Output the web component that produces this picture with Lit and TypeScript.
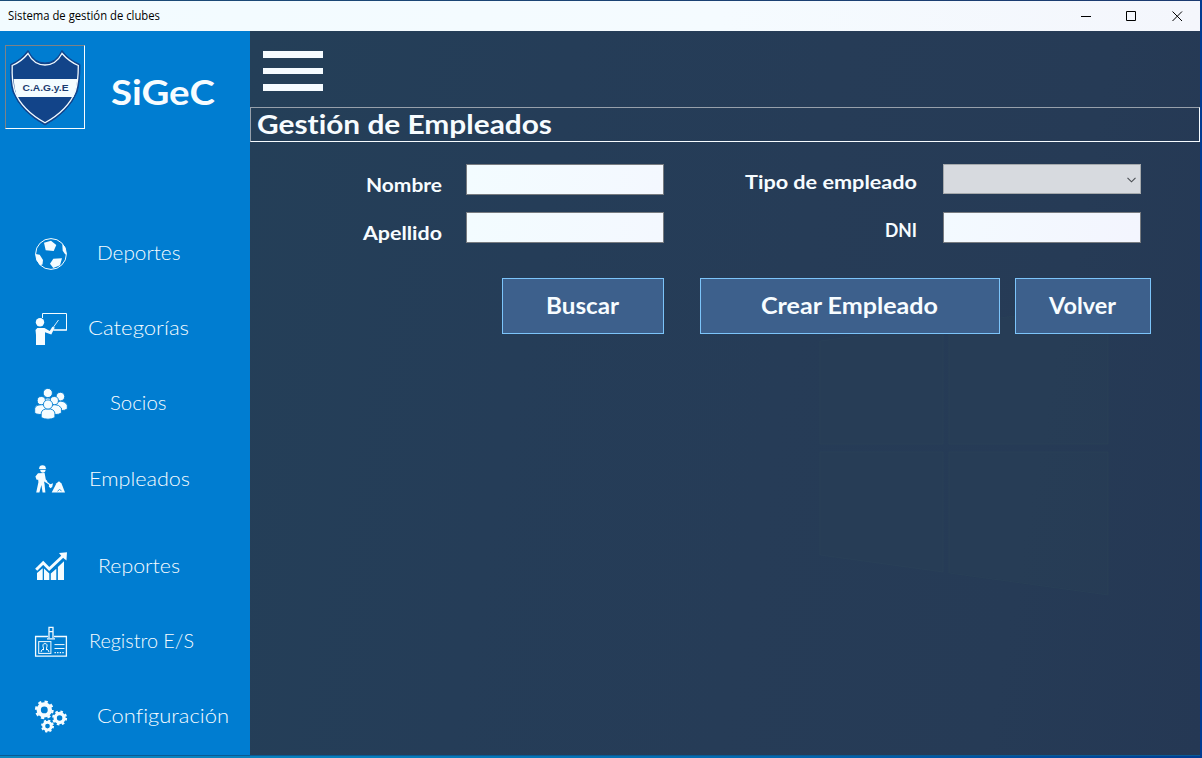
import { LitElement, html, css, svg } from "lit";
import { customElement, property } from "lit/decorators.js";

// Draws one line of text spread over a given advance width.
@customElement("fit-text")
class FitText extends LitElement {
  @property() text = "";
  @property({ type: Number }) w = 100;
  @property({ type: Number }) size = 18;
  static styles = css`
    :host { display: block; flex: none; }
    svg { display: block; overflow: visible; }
    text { fill: currentColor; font-variant-ligatures: none; }
  `;
  render() {
    const base = Math.round(this.size);
    return html`<svg width=${this.w} height=${base + 6}>
      <text x="0" y=${base} font-size=${this.size} textLength=${this.w} lengthAdjust="spacingAndGlyphs">${this.text}</text>
    </svg>`;
  }
}

const gear = (x: number, y: number, r: number, n: number) => {
  const c = 2 * Math.PI * (r - 1);
  return svg`
    <circle cx=${x} cy=${y} r=${r * 0.6} fill="none" stroke="#f5fcff" stroke-width=${r * 0.46}></circle>
    <circle cx=${x} cy=${y} r=${r - 1} fill="none" stroke="#f5fcff" stroke-width="2.2"
      stroke-dasharray=${`${(c / n) * 0.5} ${(c / n) * 0.5}`}></circle>`;
};

const icons: Record<string, unknown> = {
  ball: svg`<circle cx="16" cy="16" r="15.4" fill="none" stroke="#f5fcff" stroke-width="1"/>
    <path d="M9 4.7 16 2.7 21.3 7 18.7 13 10.7 12.3ZM27.3 6.3 30 9 31.5 16 30.3 16.5 27.7 12.7ZM.6 16 4.7 16.7 8 22 7.5 26.5 5 27.3 1.5 22ZM18.3 20.7 27 20.3 25 27.3 18.3 30 15 25.7Z"/>`,
  teacher: svg`<path d="M7.5 5V.5H31.5V17H18.5" fill="none" stroke="#f5fcff" stroke-width="1"/><path d="M19 16H32V18H18Z" opacity=".6"/>
    <circle cx="5" cy="9.3" r="4.2"/><path d="M2.3 15H9.5L14.7 18 17.4 13.7 19.8 14.6 16.3 21.6 10 19.2V32H1V22L.5 17Z"/>
    <path d="M18.5 14 23.5 7" stroke="#f5fcff" stroke-width=".9" fill="none"/>`,
  group: svg`<g stroke="#007dd1" stroke-width=".9">
    <path d="M7.5 21V15Q8 10 12.8 10T18 15V21Z"/><circle cx="12.8" cy="5" r="4.6"/>
    <path d="M20 22.5V17Q21 13 25.5 13T32.3 17V21Q30 22.6 26 22.6Z"/><circle cx="25.4" cy="8.6" r="4.3"/>
    <path d="M-.3 25V20Q1 16.6 6.3 16.6T12 20V26.5H5Q1 26.3-.3 25Z"/><circle cx="6.3" cy="12.6" r="4.1"/>
    <path d="M14 26.5V20Q15 16.6 19.5 16.6T26.4 20V25Q24 26.6 20 26.6Z"/><circle cx="19.3" cy="12.6" r="4.1"/>
    <path d="M6.2 29.5V25Q7 20.8 13 20.8T19.9 25V29.5Q17 31.2 13 31.2T6.2 29.5Z"/><circle cx="13" cy="16.5" r="4.6"/></g>`,
  worker: svg`<path d="M4.2 4.4Q4.2 1.2 7.5 1.2T10.8 4.4L11.4 5H3.8Z"/><path d="M5 5.7H10.6Q10.4 8.6 7.8 8.8 5.2 8.4 5 5.7Z"/>
    <path d="M3 9.3 9.6 9 10.8 15.4 12.5 17.2 11.4 18.8 9 17.3 9.6 20.5 10.4 28.5H7.6L6.4 21 4.4 28.5H1.2L3.4 18.3 3.2 15.8 1.6 15.8.4 12.4Z"/>
    <path d="M9 16.2 16 21.5" stroke="#f5fcff" stroke-width="1.1" fill="none"/><path d="M14.2 20.8 18 19.2 17.2 23 15.4 24.2 13.8 22.4Z"/>
    <path d="M16.7 28.5 21.5 19.2 24 17.3 26.5 19.5 30 28.5Z"/><path d="M22.5 27.2Q24.5 24 26.5 26.8" stroke="#007dd1" stroke-width=".8" fill="none"/>`,
  chart: svg`<path d="M1.2 18.8 8.2 11.8 14.2 18 28 5" fill="none" stroke="#f5fcff" stroke-width="3"/>
    <path d="M24 1.9 32 1.3 31.5 9.6 28.7 7.2 25.8 4.2Z"/>
    <path d="M2 22 7.7 17.3V28.9H2ZM9 17.5 14.3 22.4V28.9H9ZM15.8 22.6 21.3 17.8V28.9H15.8ZM22.9 16 29 10.3V28.9H22.9Z"/>`,
  card: svg`<g fill="none" stroke="#f5fcff" transform="translate(0 -.4)"><path d="M13 10.9H.6V30.5H31.4V10.9H19" stroke-width="1.3"/>
    <path d="M14 12.5V1.8H18V12.5M12 13.3H20M14 6H18" stroke-width="1.3"/><rect x="3.7" y="16" width="12.2" height="11.8"/>
    <path d="M6 26.5Q6.3 24 8.5 23.3M14 26.5Q13.5 24 11.5 23.3M8.5 24.5V22.5Q6.8 18 10 18T11.5 22.5V24.5"/>
    <path d="M19.5 19H29.5M19.5 22.9H29.5"/><path d="M19.5 27H29.5" stroke-width="1.4" stroke-dasharray="1.4 1.2"/></g>`,
  gears: svg`<g transform="translate(0 -.4)">${gear(9.3, 9.3, 9.3, 8)}${gear(24.6, 17.4, 7.4, 8)}${gear(12.5, 25.5, 6.4, 8)}</g>`,
};

const items = [
  { icon: "ball", text: "Deportes", x: 97, w: 83.5, gap: 43 },
  { icon: "teacher", text: "Categorías", x: 88, w: 101, gap: 43 },
  { icon: "group", text: "Socios", x: 110, w: 56.5, gap: 44 },
  { icon: "worker", text: "Empleados", x: 88.5, w: 101, gap: 55 },
  { icon: "chart", text: "Reportes", x: 97.5, w: 82, gap: 43 },
  { icon: "card", text: "Registro E/S", x: 88.5, w: 105, gap: 43 },
  { icon: "gears", text: "Configuración", x: 96.5, w: 132, gap: 0 },
];

@customElement("app-root")
class AppRoot extends LitElement {
  static styles = css`
    :host { display: block; width: 1202px; height: 758px; overflow: hidden;
      font-family: "Century Gothic", "URW Gothic", Lato, sans-serif; color: #f7fcff; }
    * { box-sizing: border-box; }
    .desktop { height: 758px; padding: 1px 2px 2px 0; background: linear-gradient(90deg, #0a86c0 0, #087fbd 30%, #0567ae 65%, #003c92 100%); }
    .window { height: 755px; display: flex; flex-direction: column; }
    .topline { height: 1px; margin-top: -1px; background: linear-gradient(90deg, #1b4c78, #1b3a70); flex: none; }
    .titlebar { height: 30px; flex: none; display: flex; align-items: center; justify-content: space-between;
      padding: 0 17px 0 8px; background: linear-gradient(90deg, #f2fbff, #f5fbff 60%, #f4f6fc); color: #000; }
    .caption { font-family: "Open Sans", sans-serif; padding-top: 2px; }
    .controls { display: flex; gap: 35px; }
    .controls svg { display: block; width: 11px; height: 11px; fill: none; stroke: #000; }
    .controls svg:first-child { margin-right: -1px; }
    .body { flex: 1; display: flex; min-height: 0; border-bottom: 1px solid #0a5a94; }
    .sidebar { width: 250px; flex: none; background: #007dd1; }
    .brand { display: flex; padding: 14px 0 0 5px; height: 207px; }
    .logo { width: 80px; height: 84px; border: 1px solid; border-color: #7d8287 #f7fcff #f7fcff #7d8287; outline: 0; }
    .logo svg { display: block; width: 78px; height: 82px; }
    .logo text { font: bold 9.6px "Liberation Sans", sans-serif; }
    .brandname { margin: 25px 0 0 26px; font-weight: 700; }
    .item { display: flex; height: 32px; padding-left: 35px; }
    .item svg { width: 32px; height: 32px; overflow: visible; fill: #f5fcff; flex: none; }
    .item fit-text { margin-top: 2px; font-weight: 300; }
    .main { flex: 1; position: relative; background: linear-gradient(100deg, #243f58 0, #253d58 30%, #263c57 55%, #263b56 80%, #253854 100%); }
    .mark { position: absolute; left: 0; top: 0; width: 950px; height: 724px; fill: #2b4257; fill-opacity: .3; stroke: #2b4459; stroke-opacity: .5; }
    .content { position: relative; display: flex; flex-direction: column; }
    .burger { display: flex; flex-direction: column; gap: 10px; width: 60px; margin: 20px 0 16px 13px; height: 40px; }
    .burger i { display: block; height: 6.67px; background: #f5fbff; }
    .heading { height: 35px; padding-left: 6px; border: 1px solid; border-color: #97a0ab #f7fcff #f7fcff #97a0ab; font-weight: 700; }
    .heading fit-text { margin-top: -1px; }
    .row { display: flex; height: 48px; }
    .label { width: 192px; display: flex; justify-content: flex-end; margin-right: 24px; font-weight: 700; }
    .label.second { width: 253px; margin-right: 26px; }
    .low { padding-top: 9px; }
    .high { padding-top: 6px; }
    .field { width: 198px; height: 31px; border: 1px solid #777b80; background: linear-gradient(100deg, #f3fcff, #f4f8ff); }
    .field.alt { background: linear-gradient(100deg, #f3faff, #f3f5fe); }
    .select { width: 198px; height: 30px; border: 1px solid #a5a9ac; background: #d7dadf; display: flex; align-items: center; justify-content: flex-end; padding: 1px 4px 0 0; }
    .select svg { width: 9px; height: 6px; fill: none; stroke: #4a4d52; stroke-width: 1.1; }
    .form { margin-top: 22px; }
    .buttons { display: flex; margin: 18px 0 0 252px; }
    .btn { height: 56px; border: 1px solid #7cc4fa; background: #3d608c; display: flex; justify-content: center; padding: 13px 2px 0 0; font-weight: 700; }
    .search { width: 162px; margin-right: 36px; }
    .create { width: 300px; margin-right: 15px; }
    .back { width: 136px; }
  `;

  render() {
    return html`<div class="desktop"><div class="window">
      <div class="topline"></div>
      <div class="titlebar">
        <fit-text class="caption" text="Sistema de gestión de clubes" w="152" size="12"></fit-text>
        <div class="controls">
          <svg><path d="M0 5.5H10"/></svg>
          <svg><path d="M.5 .5H9.5V9.5H.5Z"/></svg>
          <svg><path d="M.5 .5 10 10M10 .5 .5 10"/></svg>
        </div>
      </div>
      <div class="body">
        <div class="sidebar">
          <div class="brand">
            <div class="logo"><svg viewBox="6 46 78 82">
              <path d="M28 50.5Q34 63 45 63T62 50.5Q69 60 80 64.5Q80 82 77 92Q69 112 45 125Q21 112 13 92Q10 82 10.5 64.5Q21 60 28 50.5Z" fill="#124489" stroke="#10448e"/>
              <path d="M28 53.5Q34 65 45 65T62 53.5Q69 61.5 78.3 65.5Q78.3 82 75.3 91.5Q68 110 45 122.8Q22 110 14.7 91.5Q11.7 82 12.2 65.5Q21.5 61.5 28 53.5Z" fill="none" stroke="#f2faff" stroke-width="1.3"/>
              <path d="M13.6 79H77.4Q76.5 88 73.5 97H17Q14 88 13.6 79Z" fill="#f4fcff"/>
              <text x="22.5" y="91.3" textLength="46" lengthAdjust="spacingAndGlyphs" fill="#1c3c70">C.A.G.y.E</text>
            </svg></div>
            <fit-text class="brandname" text="SiGeC" w="104" size="34.6"></fit-text>
          </div>
          ${items.map((i) => html`<div class="item" style="margin-bottom:${i.gap}px">
            <svg viewBox="0 0 32 32">${icons[i.icon]}</svg>
            <fit-text style="margin-left:${i.x - 67}px" text=${i.text} w=${i.w} size="19.5"></fit-text>
          </div>`)}
        </div>
        <div class="main">
          <svg class="mark"><path d="M570 310 693 294V413H570ZM699 293 858 274V413H699ZM570 421H693V541L570 524ZM699 421H858V564L699 542Z"/></svg>
          <div class="content">
            <div class="burger"><i></i><i></i><i></i></div>
            <div class="heading"><fit-text text="Gestión de Empleados" w="295" size="26.8"></fit-text></div>
            <div class="form">
              <div class="row">
                <div class="label low"><fit-text text="Nombre" w="76" size="19"></fit-text></div>
                <div class="field"></div>
                <div class="label second high"><fit-text text="Tipo de empleado" w="172" size="19"></fit-text></div>
                <div class="select"><svg><path d="M.5 .8 4.5 4.8 8.5 .8"/></svg></div>
              </div>
              <div class="row">
                <div class="label low"><fit-text text="Apellido" w="79" size="19"></fit-text></div>
                <div class="field"></div>
                <div class="label second high"><fit-text text="DNI" w="32" size="19"></fit-text></div>
                <div class="field alt"></div>
              </div>
            </div>
            <div class="buttons">
              <div class="btn search"><fit-text text="Buscar" w="73" size="22"></fit-text></div>
              <div class="btn create"><fit-text text="Crear Empleado" w="177" size="22"></fit-text></div>
              <div class="btn back"><fit-text text="Volver" w="67" size="22"></fit-text></div>
            </div>
          </div>
        </div>
      </div>
    </div></div>`;
  }
}
